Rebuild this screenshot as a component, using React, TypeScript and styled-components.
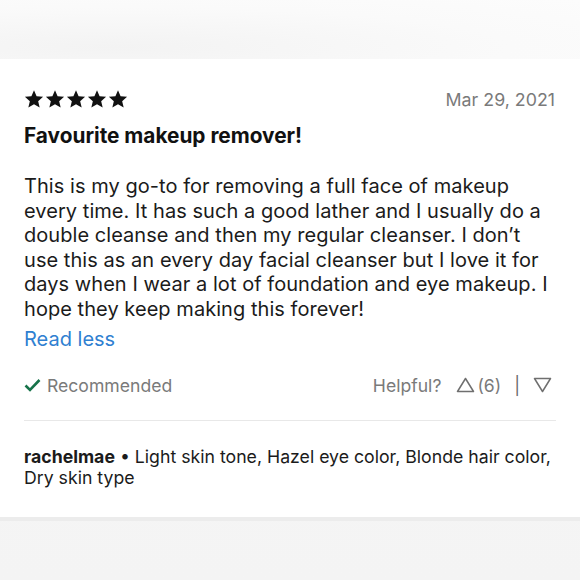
import React from 'react'
import styled, { createGlobalStyle } from 'styled-components'

const GlobalStyle = createGlobalStyle`
  html, body {
    margin: 0;
    padding: 0;
    background: #f6f6f6;
  }
  body {
    font-family: Inter, "Liberation Sans", Arial, sans-serif;
    -webkit-font-smoothing: antialiased;
  }
`

const Page = styled.div`
  width: 580px;
  height: 580px;
  display: flex;
  flex-direction: column;
  background: linear-gradient(180deg, #f8f8f8 0%, #f4f4f4 100%);
  overflow: hidden;
`

const TopBand = styled.div`
  height: 59px;
  flex-shrink: 0;
  background: radial-gradient(ellipse at 20% 80%, #f3f3f3 0%, #fafafa 60%, #fcfcfc 100%);
`

const Card = styled.div`
  background: #fff;
  padding: 29px 24px 0 24px;
  height: 462px;
  flex-shrink: 0;
  box-sizing: border-box;
  border-bottom: 4px solid #ececec;
`

const Header = styled.div`
  display: flex;
  justify-content: space-between;
  align-items: center;
  height: 22px;
`

const Stars = styled.div`
  display: flex;
  gap: 1px;
`

const DateText = styled.span`
  font-size: 17.8px;
  color: #7a7a7a;
  margin-right: 1px;
`

const Title = styled.h2`
  margin: 13px 0 0 0;
  font-size: 20.8px;
  font-weight: 700;
  color: #111;
`

const Body = styled.p`
  margin: 26px 0 0 0;
  font-size: 20px;
  letter-spacing: 0.05px;
  line-height: 24.6px;
  color: #1b1b1b;
`

const ReadLess = styled.a`
  display: block;
  margin-top: 5px;
  font-size: 20px;
  color: #2f80d1;
  text-decoration: none;
`

const Footer = styled.div`
  display: flex;
  justify-content: space-between;
  align-items: center;
  margin-top: 24px;
  padding-bottom: 24px;
  border-bottom: 1px solid #e8e8e8;
  font-size: 17.6px;
  color: #7a7a7a;
`

const Recommended = styled.div`
  display: flex;
  align-items: center;
  gap: 6px;
`

const Helpful = styled.div`
  display: flex;
  align-items: center;
  margin-right: 4px;
`

const Vote = styled.span`
  display: flex;
  align-items: center;
  gap: 2px;
  margin-left: 15px;
`

const Separator = styled.span`
  margin: 0 13px;
  color: #6a6a6a;
`

const Reviewer = styled.p`
  margin: 25px 0 0 0;
  font-size: 17.7px;
  line-height: 21px;
  color: #1b1b1b;

  strong {
    font-weight: 700;
  }
`

const Star = () => (
  <svg width="20" height="20" viewBox="0 0 24 24">
    <path
      d="M12 1.5l3.1 7.2 7.8.7-5.9 5.2 1.8 7.7L12 18.2l-6.8 4.1 1.8-7.7-5.9-5.2 7.8-.7z"
      fill="#111"
    />
  </svg>
)

const Check = () => (
  <svg width="17" height="14" viewBox="0 0 17 14">
    <path d="M1.5 7.5l4.5 4.5L15.5 2" stroke="#17734a" strokeWidth="2.6" fill="none" />
  </svg>
)

const TriUp = () => (
  <svg width="19" height="16" viewBox="0 0 19 16">
    <path d="M9.5 1.5L17.5 14.5H1.5z" stroke="#6f6f6f" strokeWidth="1.5" fill="none" strokeLinejoin="round" />
  </svg>
)

const TriDown = () => (
  <svg width="19" height="16" viewBox="0 0 19 16">
    <path d="M9.5 14.5L17.5 1.5H1.5z" stroke="#6f6f6f" strokeWidth="1.5" fill="none" strokeLinejoin="round" />
  </svg>
)

const App = () => (
  <Page>
    <GlobalStyle />
    <TopBand />
    <Card>
      <Header>
        <Stars>
          <Star />
          <Star />
          <Star />
          <Star />
          <Star />
        </Stars>
        <DateText>Mar 29, 2021</DateText>
      </Header>
      <Title>Favourite makeup remover!</Title>
      <Body>
        This is my go-to for removing a full face of makeup every time. It has such a good
        lather and I usually do a double cleanse and then my regular cleanser. I don’t use
        this as an every day facial cleanser but I love it for days when I wear a lot of
        foundation and eye makeup. I hope they keep making this forever!
      </Body>
      <ReadLess href="#">Read less</ReadLess>
      <Footer>
        <Recommended>
          <Check />
          Recommended
        </Recommended>
        <Helpful>
          Helpful?
          <Vote>
            <TriUp />
            (6)
          </Vote>
          <Separator>|</Separator>
          <TriDown />
        </Helpful>
      </Footer>
      <Reviewer>
        <strong>rachelmae</strong> • Light skin tone, Hazel eye color, Blonde hair color,
        Dry skin type
      </Reviewer>
    </Card>
  </Page>
)

export default App
